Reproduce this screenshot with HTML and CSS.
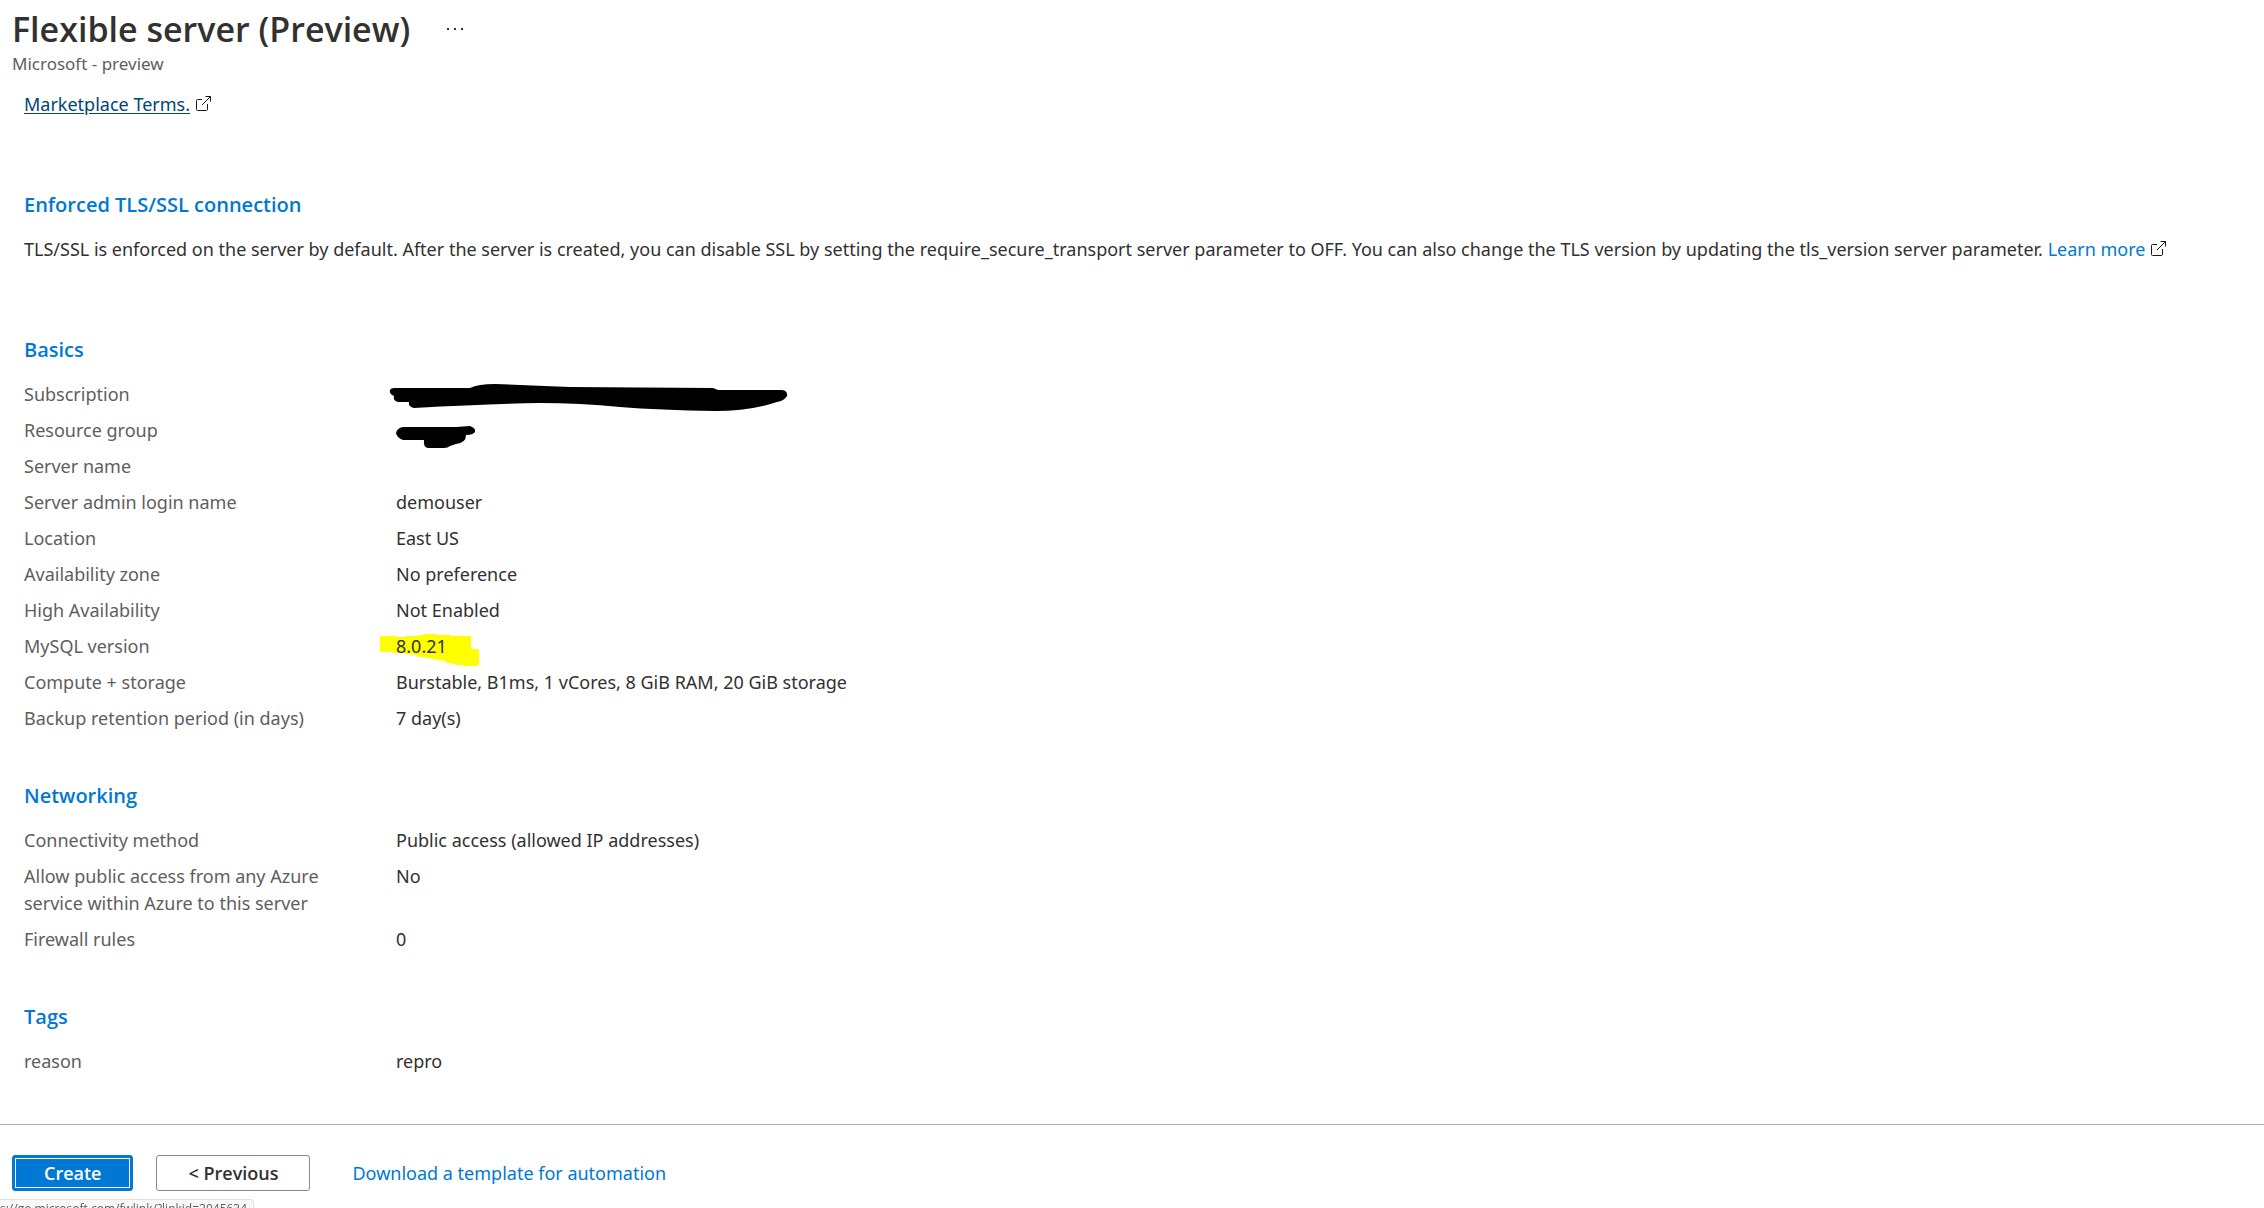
FILE: index.html
```
<!DOCTYPE html>
<html lang="en">

<head>
    <meta charset="UTF-8">
    <meta name="viewport" content="width=device-width, initial-scale=1.0">
    <title>Flexible server (Preview)</title>
    <link rel="stylesheet" href="styles.css">
</head>

<body>
    <header class="header">
        <div class="title-row">
            <h1 class="title">Flexible server (Preview)</h1>
            <button class="more" aria-label="More">
                <svg width="18" height="4" viewBox="0 0 18 4"><path d="M1 1h2v2H1zM8 1h2v2H8zM15 1h2v2h-2z" fill="#323130"/></svg>
            </button>
        </div>
        <p class="subtitle">Microsoft - preview</p>
    </header>

    <main class="content">
        <p class="terms">
            <a class="terms-link" href="#">Marketplace Terms.</a>
            <svg class="external" viewBox="0 0 17 17"><path d="M7 4.500H2.500Q1.500 4.500 1.500 5.500V14.500Q1.500 15.500 2.500 15.500H11.500Q12.500 15.500 12.500 14.500V9M7 10L15.500 1.500M10.500 1.500H15.500V6.500"/></svg>
        </p>

        <section class="section">
            <h2 class="section-title">Enforced TLS/SSL connection</h2>
            <p class="note">TLS/SSL is enforced on the server by default. After the server is created, you can disable SSL by setting the require_secure_transport server parameter to OFF. You can also change the TLS version by updating the tls_version server parameter. <a class="link" href="#">Learn more</a>
                <svg class="external" viewBox="0 0 17 17"><path d="M7 4.500H2.500Q1.500 4.500 1.500 5.500V14.500Q1.500 15.500 2.500 15.500H11.500Q12.500 15.500 12.500 14.500V9M7 10L15.500 1.500M10.500 1.500H15.500V6.500"/></svg>
            </p>
        </section>

        <section class="section">
            <h2 class="section-title">Basics</h2>
            <dl class="summary">
                <dt>Subscription</dt>
                <dd class="marked">
                    <svg class="scribble" width="420" height="90" viewBox="0 0 420 90">
                        <path d="M14 17H90Q98 13 115 13Q150 14 190 16L333 17L338 19H402Q408 20 407 25Q404 30 397 31Q370 40 335 40Q280 39 240 36Q200 32 160 32Q110 33 34 37Q28 36 29 31H18Q13 30 14 25Q9 23 10 19Q11 17 14 17Z"/>
                        <path d="M23 56H76L90 55Q96 57 95 61Q93 64 86 64Q86 72 76 73L70 75Q68 77 64 77H48Q43 76 44 69H23Q17 67 16 62Q17 57 23 56Z"/>
                    </svg>
                </dd>
                <dt>Resource group</dt>
                <dd></dd>
                <dt>Server name</dt>
                <dd></dd>
                <dt>Server admin login name</dt>
                <dd>demouser</dd>
                <dt>Location</dt>
                <dd>East US</dd>
                <dt>Availability zone</dt>
                <dd>No preference</dd>
                <dt>High Availability</dt>
                <dd>Not Enabled</dd>
                <dt>MySQL version</dt>
                <dd class="marked">
                    <svg class="highlight" width="100" height="34" viewBox="0 0 100 34"><path d="M0 3H16V4H26V3H38V2H44V1H56V2H71V3H91V16H99V32L97 33H84V32H76V31H71V30H66V28L51 26V25H45V24H37V22L24 21V20H13V19H0Z"/></svg>
                    <span class="marked-text">8.0.21</span>
                </dd>
                <dt>Compute + storage</dt>
                <dd>Burstable, B1ms, 1 vCores, 8 GiB RAM, 20 GiB storage</dd>
                <dt>Backup retention period (in days)</dt>
                <dd>7 day(s)</dd>
            </dl>
        </section>

        <section class="section">
            <h2 class="section-title">Networking</h2>
            <dl class="summary">
                <dt>Connectivity method</dt>
                <dd>Public access (allowed IP addresses)</dd>
                <dt>Allow public access from any Azure service within Azure to this server</dt>
                <dd>No</dd>
                <dt>Firewall rules</dt>
                <dd>0</dd>
            </dl>
        </section>

        <section class="section">
            <h2 class="section-title">Tags</h2>
            <dl class="summary">
                <dt>reason</dt>
                <dd>repro</dd>
            </dl>
        </section>
    </main>

    <footer class="footer">
        <button class="btn btn-primary">Create</button>
        <button class="btn">&lt; Previous</button>
        <a class="link download" href="#">Download a template for automation</a>
    </footer>

    <div class="status">s://go.microsoft.com/fwlink/?linkid=2045634</div>
</body>

</html>
```
FILE: styles.css
```
* {
    box-sizing: border-box;
}

body {
    display: flex;
    flex-direction: column;
    height: 100vh;
    margin: 0;
    overflow: hidden;
    background-color: #fff;
    color: #323130;
    font-family: "Segoe UI", "Noto Sans", sans-serif;
    font-size: 18px;
    line-height: 27px;
}

h1,
h2,
p,
dl,
dd {
    margin: 0;
}

.header {
    padding: 7px 12px 0;
}

.title-row {
    display: flex;
    align-items: center;
    gap: 32px;
}

.title {
    font-family: "Segoe UI", "Open Sans", sans-serif;
    font-size: 34px;
    font-weight: 600;
    line-height: 44px;
}

.more {
    display: flex;
    padding: 8px 4px;
    border: none;
    background: none;
    cursor: pointer;
}

.subtitle {
    color: #605e5c;
    font-size: 17px;
    line-height: 26px;
}

.content {
    flex: 1;
    min-height: 0;
    padding: 14px 24px 0;
}

.terms {
    margin-bottom: 73px;
}

.terms-link {
    color: #004578;
    text-underline-offset: 2px;
}

.link {
    color: #0078d4;
    text-decoration: none;
}

.external {
    width: 17px;
    height: 17px;
    fill: none;
    stroke: #1b1a19;
    vertical-align: -1px;
}

.section {
    margin-bottom: 50px;
}

.section-title {
    margin-bottom: 18px;
    color: #0078d4;
    font-family: "Segoe UI", "Open Sans", sans-serif;
    font-size: 20px;
    font-weight: 600;
}

.note {
    padding-bottom: 23px;
}

.summary {
    display: grid;
    grid-template-columns: 312px 1fr;
    column-gap: 60px;
    row-gap: 9px;
}

.summary dt {
    color: #605e5c;
}

.summary dd {
    min-height: 27px;
}

.marked {
    position: relative;
}

.marked-text {
    position: relative;
}

/* pen marks lie over the value column */
.scribble {
    position: absolute;
    top: -10px;
    left: -16px;
}

.highlight {
    position: absolute;
    top: 0;
    left: -16px;
    fill: #ff0;
}

.footer {
    display: flex;
    align-items: center;
    height: 84px;
    padding: 13px 12px 0;
    border-top: 1px solid #b3b0ad;
}

.btn {
    height: 36px;
    margin-right: 23px;
    padding: 0 31px;
    border: 1px solid #8a8886;
    border-radius: 3px;
    background-color: #fff;
    color: #323130;
    font: inherit;
    font-family: "Segoe UI", "Open Sans", sans-serif;
    font-weight: 600;
    cursor: pointer;
}

.btn-primary {
    border-color: #0078d4;
    background-color: #0078d4;
    color: #fff;
    outline: 1px solid #fff;
    outline-offset: -4px;
}

.download {
    margin-left: 19px;
}

/* link preview, mostly below the window edge */
.status {
    position: fixed;
    bottom: -14px;
    left: 0;
    height: 23px;
    padding: 0 6px 0 0;
    border: 1px solid #e1e1e1;
    border-left: none;
    border-top-right-radius: 4px;
    background-color: #f8f8f8;
    color: #605e5c;
    font-family: "Segoe UI", "Open Sans", sans-serif;
    font-size: 12px;
    line-height: 18px;
}
```
